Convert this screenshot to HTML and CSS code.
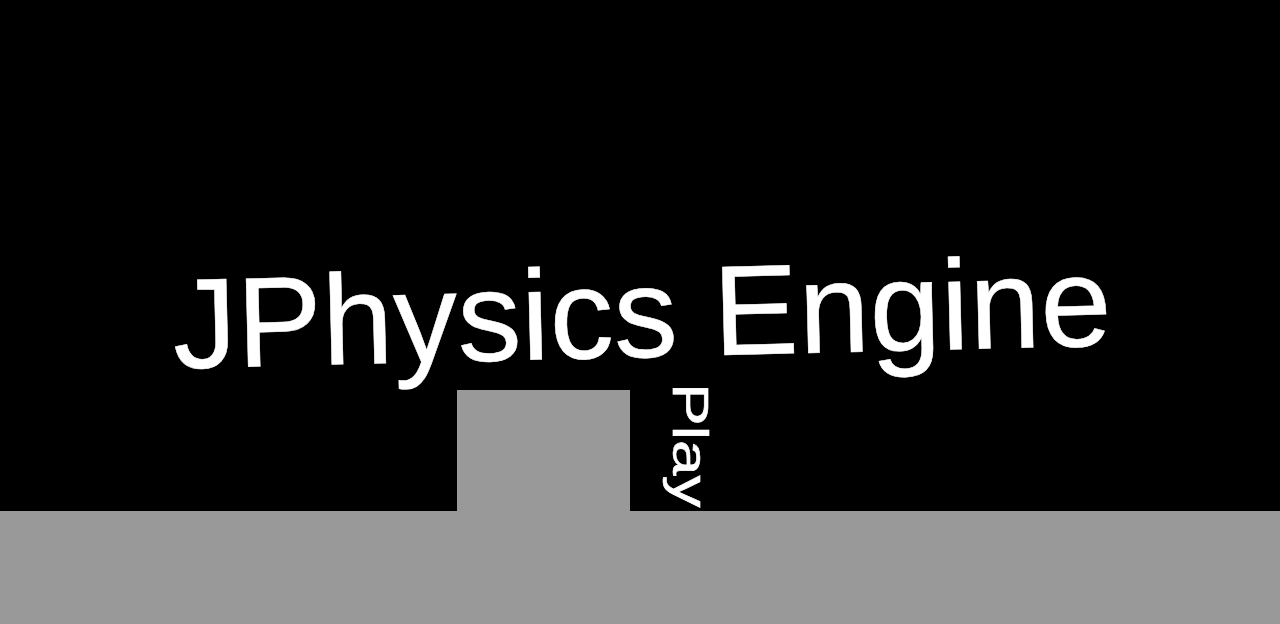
FILE: index.html
```html
<!DOCTYPE html>
<html lang="en">
<head>
<meta charset="utf-8">
<title>JPhysics Engine</title>
<link rel="stylesheet" href="styles.css">
</head>
<body>
<main class="stage">
  <h1 class="title">JPhysics Engine</h1>
  <div class="scene">
    <div class="block"></div>
    <button class="play">Play</button>
  </div>
  <div class="floor"></div>
</main>
</body>
</html>
```
FILE: styles.css
```css
html, body {
  margin: 0;
  padding: 0;
  background: #000;
}
.stage {
  width: 1280px;
  height: 624px;
  display: flex;
  flex-direction: column;
  overflow: hidden;
  background: #000;
}
.title {
  margin: 249px 0 0 0;
  height: 128px;
  font-family: "Liberation Sans", Arial, sans-serif;
  font-weight: normal;
  font-size: 128px;
  line-height: 128px;
  color: #fff;
  text-align: center;
  white-space: nowrap;
  -webkit-text-stroke: 0.5px #fff;
  transform: translateX(2px) rotate(-1.4deg);
}
.scene {
  margin-top: 13px;
  height: 121px;
  display: flex;
  align-items: flex-start;
}
.block {
  margin-left: 457px;
  width: 173px;
  height: 121px;
  background: #999;
}
.play {
  margin: -7px 0 0 35px;
  padding: 0;
  border: 0;
  background: transparent;
  color: #fff;
  writing-mode: vertical-rl;
  font-family: "Liberation Sans", Arial, sans-serif;
  font-size: 50px;
  line-height: 50px;
  -webkit-text-stroke: 0.6px #fff;
  transform: scaleY(1.28);
  transform-origin: top;
}
.floor {
  flex: 1;
  background: #999;
}
```
